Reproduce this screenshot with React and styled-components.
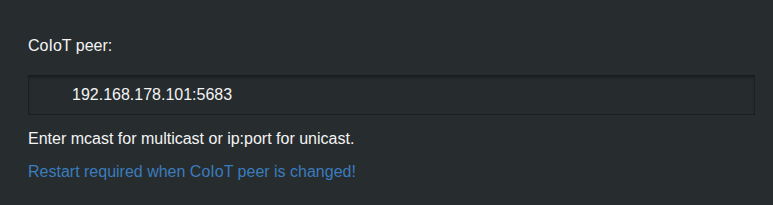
import React, { useState } from "react";
import styled, { createGlobalStyle } from "styled-components";

const GlobalStyle = createGlobalStyle`
  html, body {
    margin: 0;
    padding: 0;
    background: #272c2f;
  }
  body {
    font-family: "Liberation Sans", Arial, sans-serif;
    color: #f2f2f2;
  }
`;

const Page = styled.div`
  height: 205px;
  box-sizing: border-box;
  padding: 35px 18px 0 28px;
  background: #272c2f;
`;

const FormGroup = styled.div`
  display: flex;
  flex-direction: column;
`;

const Label = styled.label`
  font-size: 16px;
  line-height: 22px;
  color: #f4f4f4;
  margin-bottom: 18px;
`;

const TextInput = styled.input`
  box-sizing: border-box;
  width: 727px;
  height: 40px;
  padding: 0 12px 0 43px;
  border: 1px solid #1c2022;
  border-top-color: #181b1d;
  background: #262b2e;
  box-shadow: inset 0 2px 2px rgba(0, 0, 0, 0.25);
  color: #f4f4f4;
  font-family: "Liberation Sans", Arial, sans-serif;
  font-size: 16px;

  &:focus {
    outline: none;
  }
`;

const Help = styled.p`
  margin: 13px 0 0;
  font-size: 16px;
  line-height: 22px;
  color: ${({ info }) => (info ? "#3a7cbd" : "#f4f4f4")};

  & + & {
    margin-top: 11px;
  }
`;

export default function App() {
  const [peer, setPeer] = useState("192.168.178.101:5683");

  return (
    <>
      <GlobalStyle />
      <Page>
        <FormGroup>
          <Label htmlFor="coiot-peer">CoIoT peer:</Label>
          <TextInput
            id="coiot-peer"
            type="text"
            value={peer}
            onChange={(e) => setPeer(e.target.value)}
          />
          <Help>Enter mcast for multicast or ip:port for unicast.</Help>
          <Help info>Restart required when CoIoT peer is changed!</Help>
        </FormGroup>
      </Page>
    </>
  );
}
